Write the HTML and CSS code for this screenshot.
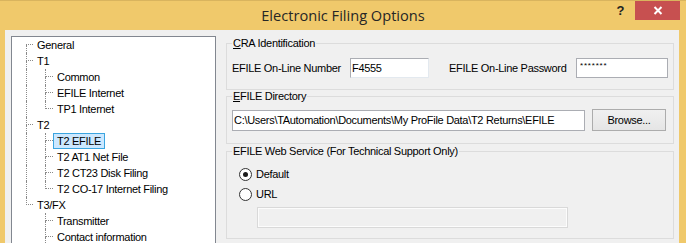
FILE: index.html
```html
<!DOCTYPE html>
<html lang="en">
<head>
    <meta charset="UTF-8">
    <title>Electronic Filing Options</title>
    <link rel="stylesheet" href="styles.css">
</head>
<body>
    <div class="window">
        <div class="titlebar">
            <div class="title">Electronic Filing Options</div>
            <div class="caption">
                <span class="help">?</span>
                <span class="close">
                    <svg width="10" height="9" viewBox="0 0 10 9">
                        <path d="M1.5 1 L8.5 8 M8.5 1 L1.5 8" stroke="#fff" stroke-width="2" fill="none"/>
                    </svg>
                </span>
            </div>
        </div>

        <div class="client">
            <div class="tree">
                <div class="row"><span class="tee first"><i class="up"></i><i class="lo"></i></span><span class="label">General</span></div>
                <div class="row"><span class="tee"><i class="up"></i><i class="lo"></i></span><span class="label">T1</span></div>
                <div class="row sub"><span class="pipe"></span><span class="tee"><i class="up"></i><i class="lo"></i></span><span class="label">Common</span></div>
                <div class="row sub"><span class="pipe"></span><span class="tee"><i class="up"></i><i class="lo"></i></span><span class="label">EFILE Internet</span></div>
                <div class="row sub"><span class="pipe"></span><span class="tee last"><i class="up"></i><i class="lo"></i></span><span class="label">TP1 Internet</span></div>
                <div class="row"><span class="tee"><i class="up"></i><i class="lo"></i></span><span class="label">T2</span></div>
                <div class="row sub"><span class="pipe"></span><span class="tee"><i class="up"></i><i class="lo"></i></span><span class="label selected">T2 EFILE</span></div>
                <div class="row sub"><span class="pipe"></span><span class="tee"><i class="up"></i><i class="lo"></i></span><span class="label">T2 AT1 Net File</span></div>
                <div class="row sub"><span class="pipe"></span><span class="tee"><i class="up"></i><i class="lo"></i></span><span class="label">T2 CT23 Disk Filing</span></div>
                <div class="row sub"><span class="pipe"></span><span class="tee last"><i class="up"></i><i class="lo"></i></span><span class="label">T2 CO-17 Internet Filing</span></div>
                <div class="row"><span class="tee last"><i class="up"></i><i class="lo"></i></span><span class="label">T3/FX</span></div>
                <div class="row sub"><span class="pipe none"></span><span class="tee"><i class="up"></i><i class="lo"></i></span><span class="label">Transmitter</span></div>
                <div class="row sub"><span class="pipe none"></span><span class="tee"><i class="up"></i><i class="lo"></i></span><span class="label">Contact information</span></div>
            </div>

            <div class="panel">
                <fieldset class="group group-cra">
                    <legend><u>C</u>RA Identification</legend>
                    <div class="field-row">
                        <label class="cap cap-number" for="efileNumber">EFILE On-Line Number</label>
                        <input class="edit edit-number" id="efileNumber" type="text" value="F4555">
                        <label class="cap cap-password" for="efilePassword">EFILE On-Line Password</label>
                        <input class="edit edit-password" id="efilePassword" type="text" value="*******">
                    </div>
                </fieldset>

                <fieldset class="group group-dir">
                    <legend><u>E</u>FILE Directory</legend>
                    <div class="field-row">
                        <input class="edit edit-dir" type="text" value="C:\Users\TAutomation\Documents\My ProFile Data\T2 Returns\EFILE">
                        <button class="btn" type="button">Browse...</button>
                    </div>
                </fieldset>

                <fieldset class="group group-web">
                    <legend>EFILE Web Service (For Technical Support Only)</legend>
                    <div class="radio first-radio"><span class="dot checked"></span><span>Default</span></div>
                    <div class="radio"><span class="dot"></span><span>URL</span></div>
                    <input class="edit edit-url" type="text" disabled>
                </fieldset>
            </div>
        </div>
    </div>
</body>
</html>
```

FILE: styles.css
```css
:root {
    --frame: #f0c96b;
    --face: #f0f0f0;
    --line: #dcdcdc;
    --tree-line: #8a8a8a;
}

* {
    margin: 0;
    padding: 0;
    box-sizing: border-box;
}

body {
    background: var(--frame);
    color: #000;
    font-family: "Liberation Sans", Arial, sans-serif;
    font-size: 11px;
    letter-spacing: -0.3px;
    overflow: hidden;
}

.window {
    width: 686px;
    height: 243px;
    display: flex;
    flex-direction: column;
    background: var(--frame);
    overflow: hidden;
}

/* title bar */
.titlebar {
    height: 30px;
    flex: none;
    border-top: 1px solid #d9b45e;
    display: grid;
    grid-template-columns: 1fr auto 1fr;
}

.title {
    grid-column: 2;
    align-self: center;
    font-family: "Open Sans", sans-serif;
    font-size: 14.6px;
    letter-spacing: 0;
    color: #262626;
    margin-top: -1px;
}

.caption {
    grid-column: 3;
    justify-self: end;
    display: flex;
    align-items: flex-start;
    margin-right: 6px;
}

.help {
    width: 29px;
    height: 19px;
    text-align: center;
    font-size: 13px;
    font-weight: bold;
    line-height: 19px;
    color: #222;
    letter-spacing: 0;
}

.close {
    width: 45px;
    height: 19px;
    background: #c75050;
    display: flex;
    align-items: center;
    justify-content: center;
}

/* client area */
.client {
    flex: 1;
    display: flex;
    align-items: flex-start;
    gap: 10px;
    margin: 0 7px 0 5px;
    padding: 6px 5px 0 6px;
    background: var(--face);
}

/* tree view */
.tree {
    width: 205px;
    height: 220px;
    flex: none;
    background: #fff;
    border: 1px solid #828790;
    overflow: hidden;
}

.row {
    display: flex;
    height: 16px;
    padding-left: 14px;
}

.tee {
    display: flex;
    flex-direction: column;
    width: 7px;
    flex: none;
}

.sub .tee {
    width: 8px;
}

.tee i {
    display: block;
    height: 8px;
    border-left: 1px dotted var(--tree-line);
}

.tee .up {
    border-bottom: 1px dotted var(--tree-line);
}

.tee.first .up,
.tee.last .lo {
    border-left: none;
}

.pipe {
    width: 19px;
    flex: none;
    border-left: 1px dotted var(--tree-line);
}

.pipe.none {
    border-left: none;
}

.label {
    height: 16px;
    line-height: 14px;
    padding: 0 3px;
    border: 1px solid transparent;
    white-space: nowrap;
}

.label.selected {
    background: #cce8ff;
    border-color: #3ba5e0;
}

/* right side */
.panel {
    width: 448px;
    flex: none;
    margin-top: 1px;
}

.group {
    border: 1px solid var(--line);
    padding: 0 5px;
    min-width: 0;
}

.group legend {
    line-height: 13px;
    padding: 0 1px;
}

.group-cra {
    padding-bottom: 11px;
}

.group-dir {
    padding-bottom: 12px;
}

.group-web {
    margin-top: 1px;
    padding-bottom: 10px;
}

.field-row {
    display: flex;
    align-items: center;
}

.group-cra .field-row {
    margin-top: 8px;
    height: 20px;
}

.group-dir .field-row {
    margin-top: 6px;
    height: 22px;
}

.cap {
    flex: none;
    white-space: nowrap;
}

.cap-number {
    width: 118px;
}

.cap-password {
    width: 127px;
    margin-left: 20px;
}

.edit {
    display: block;
    height: 20px;
    padding: 0 1px;
    border: 1px solid #abadb3;
    background: #fff;
    color: #000;
    font-family: inherit;
    font-size: 11px;
    letter-spacing: -0.3px;
    outline: none;
}

.edit-number {
    width: 79px;
    border-color: #abadb3 #e3e9ef #e3e9ef #abadb3;
}

.edit-password {
    width: 92px;
    padding: 0 3px 5px;
    font-size: 8px;
    letter-spacing: 0.8px;
}

.edit-dir {
    width: 353px;
    height: 21px;
}

.btn {
    width: 74px;
    height: 22px;
    margin-left: 7px;
    border: 1px solid #acacac;
    background: linear-gradient(#f0f0f0, #e5e5e5);
    color: #000;
    font-family: inherit;
    font-size: 11px;
    letter-spacing: -0.3px;
}

.radio {
    display: flex;
    align-items: center;
    gap: 4px;
    height: 20px;
    padding-left: 7px;
}

.first-radio {
    margin-top: 6px;
}

.dot {
    width: 13px;
    height: 13px;
    border: 1px solid #333;
    border-radius: 50%;
    background: #fff;
    display: flex;
    align-items: center;
    justify-content: center;
}

.dot.checked::after {
    content: "";
    width: 5px;
    height: 5px;
    border-radius: 50%;
    background: #1a1a1a;
}

.edit-url {
    width: 311px;
    height: 21px;
    margin: 3px 0 0 25px;
    border-color: #d9d9d9;
    background: var(--face);
    box-shadow: inset 0 0 0 1px #fcfcfc;
}
```
